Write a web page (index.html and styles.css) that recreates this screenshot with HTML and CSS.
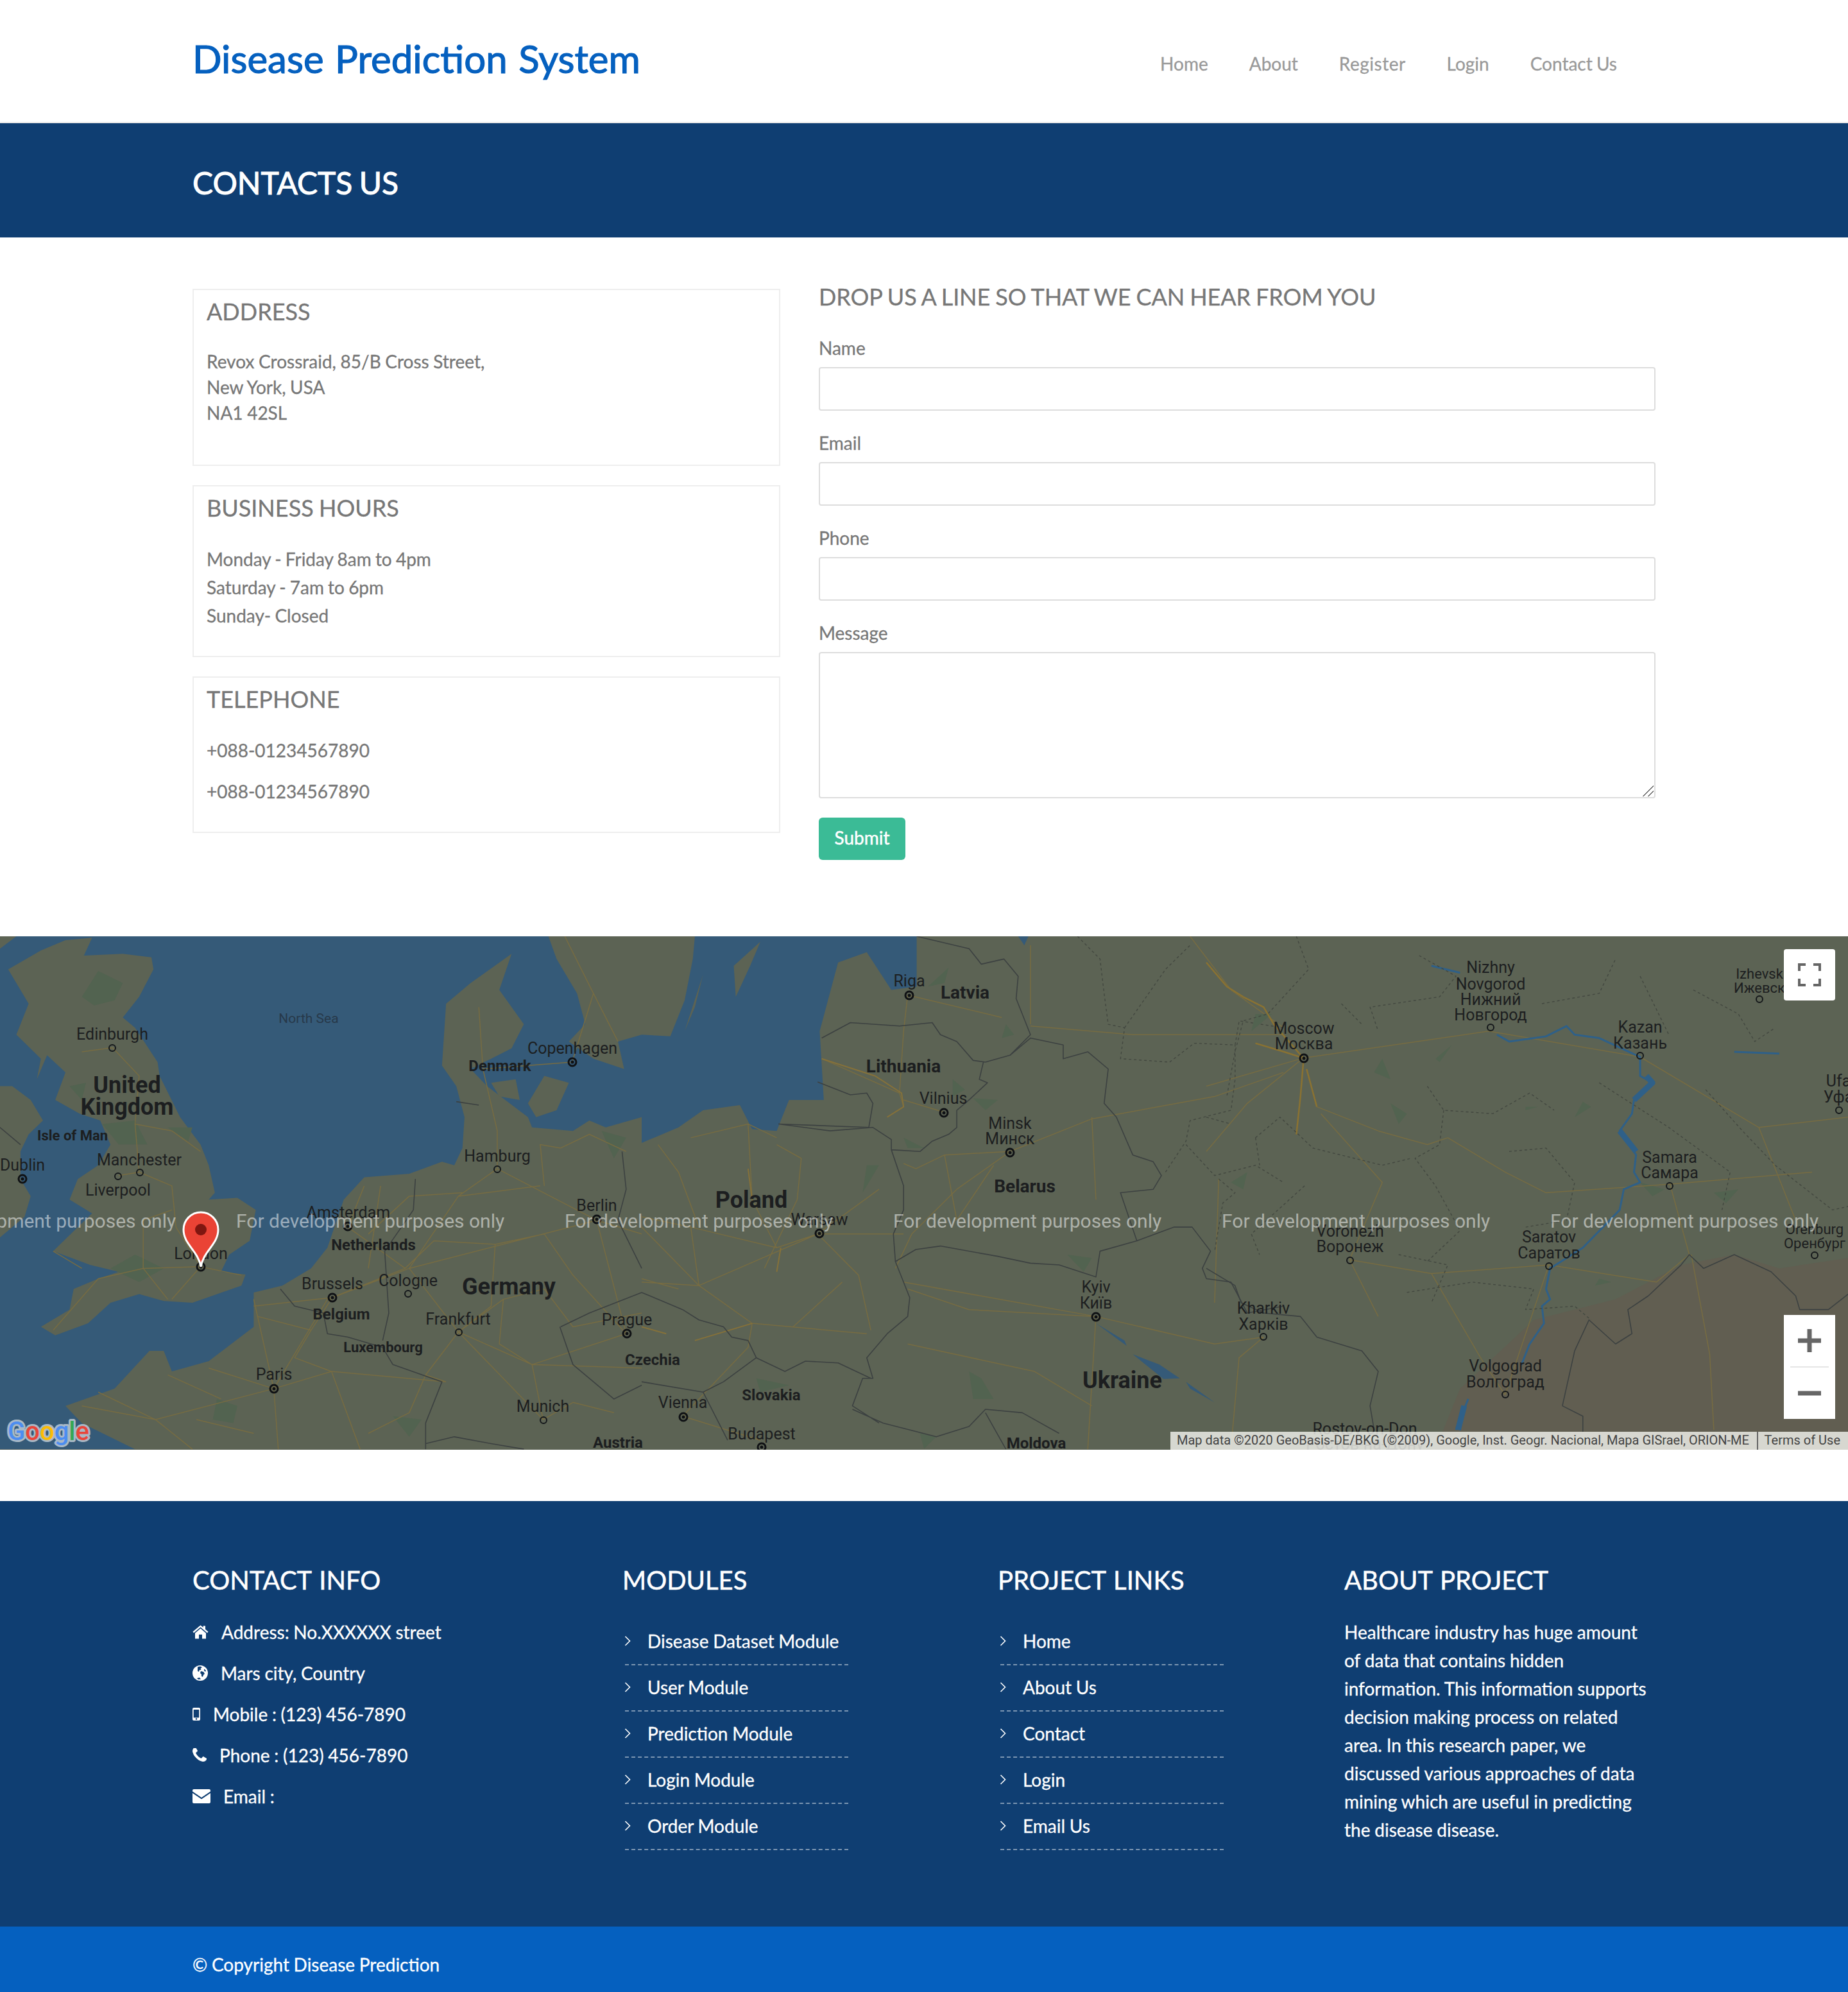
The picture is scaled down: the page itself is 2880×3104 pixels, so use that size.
FILE: index.html
```html
<!DOCTYPE html>
<html lang="en">
<head>
<meta charset="utf-8">
<title>Contacts Us - Disease Prediction System</title>
<link rel="stylesheet" href="styles.css">
</head>
<body>
<header class="site-header">
  <a class="brand" href="#">Disease Prediction System</a>
  <nav class="main-nav">
    <a href="#">Home</a><a href="#">About</a><a class="nav-register" href="#">Register</a><a href="#">Login</a><a href="#">Contact Us</a>
  </nav>
</header>
<section class="banner"><h1>CONTACTS US</h1></section>
<main class="contact">
  <div class="info-col">
    <article class="info-box box-address">
      <h3>ADDRESS</h3>
      <p>Revox Crossraid, 85/B Cross Street,<br>New York, USA<br>NA1 42SL</p>
    </article>
    <article class="info-box box-hours">
      <h3>BUSINESS HOURS</h3>
      <p>Monday - Friday 8am to 4pm<br>Saturday - 7am to 6pm<br>Sunday- Closed</p>
    </article>
    <article class="info-box box-phone">
      <h3>TELEPHONE</h3>
      <p>+088-01234567890</p>
      <p>+088-01234567890</p>
    </article>
  </div>
  <form class="contact-form">
    <h2>DROP US A LINE SO THAT WE CAN HEAR FROM YOU</h2>
    <label for="f-name">Name</label><input id="f-name" type="text">
    <label for="f-email">Email</label><input id="f-email" type="text">
    <label for="f-phone">Phone</label><input id="f-phone" type="text">
    <label for="f-msg">Message</label>
    <div class="msg-wrap"><textarea id="f-msg"></textarea></div>
    <button type="button">Submit</button>
  </form>
</main>
<section class="map">
<svg class="map-svg" viewBox="0 0 2880 800" width="2880" height="800" xmlns="http://www.w3.org/2000/svg">
  <rect class="land" width="2880" height="800"/>
  <!-- zone west -->
  <g transform="matrix(.6378 0 0 .5356 0 -18.2)">
    <path class="sea" d="M0,34L1340,34L1360,100L1410,200L1430,290L1390,340L1450,390L1525,420L1510,340L1568,320L1568,560L1480,590L1440,570L1400,600L1300,590L1290,560L1190,470L1150,420L1250,360L1280,290L1220,190L1250,85L1150,170L1090,230L1080,410L1115,470L1135,560L1130,650L1110,700L1080,690L1000,725L890,735L840,800L800,940L760,1000L690,1050L620,1070L620,1170L510,1270L420,1300L400,1240L365,1240L280,1350L160,1400L200,1450L330,1526L0,1526Z"/>
    <path class="land" d="M0,34L40,34L0,70ZM100,75L160,45L225,38L205,90L300,85L370,95L375,130L340,210L300,270L330,300L385,400L390,440L440,560L490,640L510,700L525,780L510,800L580,795L625,830L610,920L560,960L540,1010L600,1018L590,1050L470,1100L400,1095L340,1075L270,1100L215,1160L135,1195L100,1170L170,1120L180,1060L240,1030L290,1010L220,990L130,950L190,880L225,840L170,800L190,740L240,700L270,640L245,570L195,550L135,510L160,430L115,380L90,450L100,390L40,320L70,230L20,130ZM0,470L30,470L75,510L105,570L70,610L50,660L50,740L75,790L60,850L0,910ZM1290,520L1330,440L1390,460L1360,540L1310,560ZM1200,460L1260,450L1270,510L1220,500Z"/>
    <path class="green" d="M200,210L240,135L300,170L280,220L230,235ZM250,580L330,570L360,640L290,640ZM170,470L210,460L200,510ZM410,590L470,590L460,630ZM330,960L400,1000L340,1040L270,1000ZM530,1380L580,1400L570,1450L520,1440ZM960,1430L1030,1440L1000,1490ZM1470,600L1530,620L1500,680Z"/>
    <path class="road" d="M200,370L275,358L340,440L330,580L340,720L290,730M340,720L420,760L430,880L490,995L590,1020M490,995L350,1000L240,1030M490,995L420,1090M350,1000L350,860L420,830M669,1350L620,1090M669,1350L510,1290M669,1350L380,1440L240,1360M669,1350L810,1300L1090,1330M669,1350L680,1526M669,1350L800,1090L990,1000M1215,710L1120,790L1000,1000L1120,1185L1327,1440M1215,710L1458,860M1458,860L1530,1190M1120,1185L1300,1280L1530,1190M850,880L990,1000M1000,1000L1458,860M1458,860L1568,900M1170,240L1180,420L1215,600L1215,710M1180,420L1398,400M1398,400L1450,200L1380,34M812,1085L1000,1000M812,1085L620,1110M1120,1185L1040,1310L1090,1330M1300,1280L1568,1290M1120,790L1320,760M850,880L890,760M1370,650L1440,610L1530,660M1120,1185L1230,1090L1330,1060M380,1440L470,1526M810,1300L880,1526M200,1400L380,1440M630,1140L760,1180L812,1085M760,1180L720,1260L810,1300M900,1000L930,760M990,1000L1060,920L1210,930L1330,900L1400,1020L1530,1190M1210,930L1200,1110L1120,1185M1330,1060L1400,1170L1568,1130M1230,1090L1220,1220L1300,1280M1327,1440L1400,1390L1500,1420M1300,1280L1327,1440M1040,1310L1000,1420L900,1480M540,1380L410,1310M480,1440L620,1480M1130,780L1000,790L900,900M1330,760L1320,640L1370,650M1450,200L1510,340M200,1000L130,950M240,1030L130,1180M410,1090L350,1000M330,580L420,600L490,660"/>
    <path class="border" d="M685,1060L720,1110L790,1130L800,1190L850,1200L935,1230L960,1280L1080,1330L1040,1450L1040,1526M1015,740L1010,830L940,950L950,1130L935,1210M1115,515L1170,525M1368,1170L1400,1280L1500,1380L1568,1340M1370,1170L1440,1130L1568,1070M1040,1510L1110,1490L1200,1510L1280,1526M1520,660L1530,770L1510,860L1568,1000M0,590L50,640"/>
  </g>
  <!-- zone centre -->
  <g transform="matrix(.6378 0 0 .5356 1000 -18.2)">
    <path class="sea" d="M130,34L672,34L672,180L610,190L550,80L480,110L435,310L445,510L360,510L330,600L270,595L240,525L150,540L90,590L0,635L0,320L70,325L105,220L125,100ZM920,34L945,34L935,60ZM1200,1250L1265,1280L1315,1320L1275,1322ZM1110,1160L1180,1210L1185,1225ZM1330,1330L1400,1390L1340,1350Z"/>
    <path class="land" d="M230,210L225,120L290,50L265,120ZM105,310L150,145L130,240Z"/>
    <path class="green" d="M700,180L750,125L740,170ZM890,290L910,320L880,330ZM760,450L790,480L760,500ZM810,505L870,510L840,540ZM550,700L580,700L540,780ZM640,620L690,650L650,650ZM1040,960L1100,970L1080,1010ZM800,1300L830,1320L860,1380L810,1380ZM280,1320L360,1340L290,1360ZM680,1480L720,1490L690,1525Z"/>
    <path class="road" d="M0,880L140,1050L430,900M430,900L580,770M430,900L640,900M430,900L330,940L120,880L0,850M430,900L530,1020L560,1180M140,1050L270,1160L260,1230L100,1430M270,1160L550,1190M100,1430L290,1500M440,390L630,490L640,530L600,560M640,510L737,545M650,205L640,310L630,490M650,205L880,270M900,660L1100,565L1400,500L1568,430M900,660L770,770L660,900L620,1000M900,660L740,670L670,710L640,695M1110,1140L1400,1220L1520,1200M1110,1140L800,1120L650,1060M1110,1140L1090,1526M1340,34L1440,190L1568,300M260,580L270,800L330,940M390,680L330,640M390,680L380,800L300,1000M120,880L140,1050L0,1040M950,295L1200,320L1568,320M950,60L950,290M740,670L770,860L860,700M1110,800L1100,560M1410,740L1400,1100M640,1040L1110,1140M490,1040L370,1170M650,1220L960,1300L1100,1400M0,1030L90,1060M120,620L260,580L330,620M40,640L90,720L140,880"/>
    <path class="major-thin" d="M440,390L570,440L635,490L640,530L600,560M130,1210L270,1160M0,1170L60,1190M260,710L270,800M340,940L330,1010"/>
    <path class="border" d="M440,330L510,285L630,295L710,285L730,320L770,340L810,395L840,400M672,34L800,70L830,115L885,100L920,150L915,215L950,320L900,380L840,400M835,400L825,450L845,460L800,510L770,540L770,590L750,610L710,630L680,660L610,655M430,458L510,495L550,490L565,520L555,590L335,580L460,600L565,590L610,625L610,655L640,760L640,830L615,900L620,980L655,1085L650,1140L600,1190L550,1260L565,1320L540,1320L515,1400L580,1450M620,980L670,945L730,935L870,965L950,985L1020,990L1110,1025L1120,950L1210,920L1170,780L1250,770L1270,730L1250,690L1200,670L1160,560L1130,520L1140,420L1090,370L1030,390L1030,350L950,330L900,380M1210,920L1300,880L1345,880L1390,950L1370,1000L1380,1030L1440,1040L1480,1130L1568,1110M0,1070L100,1120L140,1150L200,1170L220,1200L260,1210L280,1260L350,1300L400,1270L480,1275L560,1320M280,1260L200,1330L150,1360L0,1330M150,1360L210,1500M515,1410L590,1450L720,1490L800,1460L840,1410L930,1420L1020,1480M840,1420L890,1526"/>
    <path class="oblast" d="M1065,34L1120,100L1130,200L1140,290L1180,300L1170,390L1290,400L1350,345L1450,350L1460,280L1568,300M1280,720L1330,630L1340,570L1440,540L1450,450L1450,350M1330,640L1400,730L1500,700L1568,750M1410,740L1450,780L1420,810L1400,950M1500,620L1510,700M1180,300L1280,130L1340,60"/>
  </g>
  <!-- zone east -->
  <g transform="matrix(.6378 0 0 .5356 1880 -18.2)">
    <path class="steppe" d="M560,1526L620,1350L800,1150L1000,1090L1160,990L1290,960L1400,1000L1568,970L1568,1526Z"/>
    <path class="green" d="M60,750L100,720L90,770ZM430,390L450,450L410,430ZM450,520L490,550L470,580ZM920,515L940,530L900,560ZM960,1030L990,1040L950,1050ZM1060,750L1120,770L1090,790ZM1240,780L1300,770L1270,810ZM120,260L160,260L110,310ZM560,390L600,350L570,400ZM780,530L810,530L780,540Z"/>
    <path class="road" d="M237,388L690,310L1060,385M1060,385L1350,590L1568,560M237,388L0,470M270,530L420,600L540,640L590,620L730,720L830,780L1133,755M1133,755L1480,720M140,1200L80,1260L60,1526M350,975L550,1015L837,990M837,990L730,1368M350,975L420,1140M350,975L430,750L280,550M1185,960L1230,1250L1240,1470M550,1015L670,1260L730,1368M1133,755L1180,960M0,660L100,520L237,388M837,990L1100,1040L1180,960M1350,590L1440,860"/>
    <path class="major" d="M0,110L50,180L90,210L140,240L165,290L237,388M120,345L190,370L237,388M237,400L230,500L220,610M245,420L270,530"/>
    <path class="river" d="M550,120L620,140M710,320L740,340L830,325L880,295L900,320L960,330L1060,385L1060,440L1090,460L1045,510L1040,550L1010,600L1050,670L1045,720L1060,750L1020,770L1010,830L920,940L840,1000L830,1060L840,1090L820,1110L825,1160L790,1220L770,1280M640,1380L610,1470M1290,370L1400,375"/>
    <path class="wide-river" d="M1075,440L1090,460L1045,510M1010,600L1050,660M630,1400L615,1470"/>
    <path class="border" d="M0,1000L70,1050L85,1100L140,1130L230,1140L270,1200L380,1240L420,1300L400,1400L410,1470M870,1400L900,1240L935,1150L1000,1220L1040,1190L1030,1120L1080,1080L1160,990L1180,960L1215,1000L1290,960L1380,1010L1440,1080L1450,1120L1520,1120L1568,1075M870,1400L920,1430L920,1476"/>
    <path class="oblast" d="M220,34L250,130L150,260L90,280L70,370L50,500M520,90L610,150L570,210L400,240L420,310M820,230L960,200L1000,100M330,230L380,290M540,470L580,540L700,550L790,490L850,540M580,540L570,640L510,680L560,760L620,890L540,980M740,660L830,650L900,750L880,860L780,880M120,620L180,560L260,650L430,700L500,680M240,760L110,900L130,960M960,460L1130,590L1280,720L1260,830M1220,480L1310,600L1390,700L1530,830L1568,820M1190,190L1300,260L1340,340L1390,300M470,960L590,990L550,1100M0,560L60,580M490,1070L650,1040L800,1060L780,1120L900,1110L940,1150M1060,150L1130,320"/>
  </g>

  <g class="dots">
    <circle cx="175" cy="174" r="5"/><circle cx="218" cy="368" r="5"/><circle cx="184" cy="374" r="5"/><circle cx="775" cy="363" r="5"/><circle cx="636" cy="557" r="5"/><circle cx="715" cy="617" r="5"/><circle cx="847" cy="754" r="5"/><circle cx="2323" cy="142" r="5"/><circle cx="2556" cy="186" r="5"/><circle cx="2742" cy="98" r="5"/><circle cx="2866" cy="271" r="5"/><circle cx="2602" cy="389" r="5"/><circle cx="2104" cy="505" r="5"/><circle cx="2414" cy="514" r="5"/><circle cx="2828" cy="497" r="5"/><circle cx="1969" cy="624" r="5"/><circle cx="2346" cy="714" r="5"/>
  </g>
  <g class="capitals">
    <circle cx="35" cy="378" r="6"/><circle cx="892" cy="196" r="6"/><circle cx="313" cy="515" r="6"/><circle cx="542" cy="452" r="6"/><circle cx="930" cy="441" r="6"/><circle cx="518" cy="563" r="6"/><circle cx="427" cy="705" r="6"/><circle cx="977" cy="619" r="6"/><circle cx="1417" cy="92" r="6"/><circle cx="1471" cy="275" r="6"/><circle cx="1574" cy="337" r="6"/><circle cx="1277" cy="463" r="6"/><circle cx="1708" cy="593" r="6"/><circle cx="1065" cy="749" r="6"/><circle cx="1187" cy="796" r="6"/><circle cx="2032" cy="190" r="6"/>
  </g>
  <g class="capital-core">
    <circle cx="35" cy="378" r="2.5"/><circle cx="892" cy="196" r="2.5"/><circle cx="313" cy="515" r="2.5"/><circle cx="542" cy="452" r="2.5"/><circle cx="930" cy="441" r="2.5"/><circle cx="518" cy="563" r="2.5"/><circle cx="427" cy="705" r="2.5"/><circle cx="977" cy="619" r="2.5"/><circle cx="1417" cy="92" r="2.5"/><circle cx="1471" cy="275" r="2.5"/><circle cx="1574" cy="337" r="2.5"/><circle cx="1277" cy="463" r="2.5"/><circle cx="1708" cy="593" r="2.5"/><circle cx="1065" cy="749" r="2.5"/><circle cx="1187" cy="796" r="2.5"/><circle cx="2032" cy="190" r="2.5"/>
  </g>

  <g class="labels" transform="translate(0 -1)">
    <text x="175" y="162">Edinburgh</text>
    <text class="sea-label" x="481" y="136">North Sea</text>
    <text x="892" y="184">Copenhagen</text>
    <text class="b24" x="779" y="211">Denmark</text>
    <text class="b36" x="198" y="245">United</text>
    <text class="b36" x="198" y="279">Kingdom</text>
    <text class="b22" x="113" y="319">Isle of Man</text>
    <text x="35" y="366">Dublin</text>
    <text x="217" y="358">Manchester</text>
    <text x="184" y="405">Liverpool</text>
    <text x="775" y="352">Hamburg</text>
    <text x="930" y="429">Berlin</text>
    <text x="543" y="440">Amsterdam</text>
    <text x="313" y="504">London</text>
    <text class="b24" x="582" y="490">Netherlands</text>
    <text x="518" y="551">Brussels</text>
    <text x="636" y="546">Cologne</text>
    <text class="b36" x="793" y="559">Germany</text>
    <text class="b24" x="532" y="598">Belgium</text>
    <text x="714" y="606">Frankfurt</text>
    <text class="b22" x="597" y="649">Luxembourg</text>
    <text x="977" y="607">Prague</text>
    <text x="427" y="692">Paris</text>
    <text x="846" y="742">Munich</text>
    <text class="b24" x="963" y="798">Austria</text>
    <text class="b24" x="1017" y="669">Czechia</text>
    <text x="1417" y="79">Riga</text>
    <text class="b28" x="1504" y="98">Latvia</text>
    <text class="b28" x="1408" y="213">Lithuania</text>
    <text x="1470" y="262">Vilnius</text>
    <text x="1574" y="301">Minsk</text>
    <text x="1574" y="325">Минск</text>
    <text class="b28" x="1597" y="400">Belarus</text>
    <text class="b36" x="1171" y="424">Poland</text>
    <text x="1277" y="451">Warsaw</text>
    <text x="1708" y="556">Kyiv</text>
    <text x="1708" y="581">Київ</text>
    <text x="1064" y="736">Vienna</text>
    <text class="b24" x="1202" y="724">Slovakia</text>
    <text x="1187" y="785">Budapest</text>
    <text class="b36" x="1749" y="705">Ukraine</text>
    <text class="b24" x="1615" y="799">Moldova</text>
    <text x="1969" y="589">Kharkiv</text>
    <text x="1969" y="614">Харків</text>
    <text x="2323" y="58">Nizhny</text>
    <text x="2323" y="84">Novgorod</text>
    <text x="2323" y="108">Нижний</text>
    <text x="2323" y="132">Новгород</text>
    <text x="2032" y="153">Moscow</text>
    <text x="2032" y="177">Москва</text>
    <text x="2556" y="151">Kazan</text>
    <text x="2556" y="176">Казань</text>
    <text class="s22" x="2742" y="67">Izhevsk</text>
    <text class="s22" x="2742" y="89">Ижевск</text>
    <text x="2865" y="235">Ufa</text>
    <text x="2865" y="260">Уфа</text>
    <text x="2602" y="354">Samara</text>
    <text x="2602" y="378">Самара</text>
    <text x="2104" y="469">Voronezh</text>
    <text x="2104" y="493">Воронеж</text>
    <text x="2414" y="478">Saratov</text>
    <text x="2414" y="503">Саратов</text>
    <text class="s22" x="2828" y="465">Orenburg</text>
    <text class="s22" x="2828" y="487">Оренбург</text>
    <text x="2346" y="679">Volgograd</text>
    <text x="2346" y="704">Волгоград</text>
    <text x="2127" y="777">Rostov-on-Don</text>
    <text x="2127" y="801">Ростов-на-Дону</text>
  </g>

  <g class="watermark">
    <text x="-144" y="454">For development purposes only</text>
    <text x="368" y="454">For development purposes only</text>
    <text x="880" y="454">For development purposes only</text>
    <text x="1392" y="454">For development purposes only</text>
    <text x="1904" y="454">For development purposes only</text>
    <text x="2416" y="454">For development purposes only</text>
  </g>

  <path class="pin" d="M313 515C309 490 286 480 286 457a27 27 0 0 1 54 0C340 480 317 490 313 515Z"/>
  <circle class="pin-dot" cx="313" cy="457" r="9"/>

  <text class="google" x="12" y="785"><tspan class="g-blue">G</tspan><tspan class="g-red">o</tspan><tspan class="g-yellow">o</tspan><tspan class="g-blue">g</tspan><tspan class="g-green">l</tspan><tspan class="g-red">e</tspan></text>
</svg>
  <button class="map-btn fullscreen" type="button" aria-label="Toggle fullscreen view">
    <svg viewBox="0 0 36 36" width="36" height="36"><path d="M2 12V2H12M24 2H34V12M34 24V34H24M12 34H2V24"/></svg>
  </button>
  <div class="zoom-control">
    <button class="map-btn zoom-btn" type="button" aria-label="Zoom in"><svg viewBox="0 0 36 36" width="36" height="36"><path d="M0 18H36M18 0V36"/></svg></button>
    <span class="zoom-divider"></span>
    <button class="map-btn zoom-btn" type="button" aria-label="Zoom out"><svg viewBox="0 0 36 36" width="36" height="36"><path d="M0 18H36"/></svg></button>
  </div>
  <div class="attribution"><span>Map data ©2020 GeoBasis-DE/BKG (©2009), Google, Inst. Geogr. Nacional, Mapa GISrael, ORION-ME</span><span class="terms">Terms of Use</span></div>
</section>
<footer class="site-footer">
  <div class="footer-grid">
    <div class="footer-col">
      <h4>CONTACT INFO</h4>
      <ul class="contact-list">
        <li><svg class="ic" width="25" height="22" viewBox="0 0 25 22"><path d="M12.5 0.5L0.5 10.6L2 12.4L12.5 3.6L23 12.4L24.5 10.6L20 6.8V1.5H16.7V4Z"/><path d="M12.5 5.6L4 12.8V21.5H10V15H15V21.5H21V12.8Z"/></svg>Address: No.XXXXXX street</li>
        <li><svg class="ic" width="24" height="24" viewBox="0 0 24 24"><circle cx="12" cy="12" r="12"/><path class="ic-cut" d="M8 2.5L12 1.5L15 3L12.5 5L13.5 7L10.5 7.5L10 10L8 9ZM13 9L17 10L19 13L17 15L16 18L14 17L14 14L12 12ZM18 5.500L21 8L20 10L18 8ZM7 20L11 19L13 21.500L9 22Z"/></svg>Mars city, Country</li>
        <li><svg class="ic" width="12" height="20" viewBox="0 0 12 20"><path fill-rule="evenodd" d="M2 0H10A2 2 0 0 1 12 2V18A2 2 0 0 1 10 20H2A2 2 0 0 1 0 18V2A2 2 0 0 1 2 0ZM1.700 3V15.500H10.300V3ZM6 16.300A1.300 1.300 0 1 0 6 18.900A1.300 1.300 0 1 0 6 16.300Z"/></svg>Mobile : (123) 456-7890</li>
        <li><svg class="ic" width="22" height="22" viewBox="192 192 1408 1408"><path d="M1600 1240q0 27-10 70.5t-21 68.500q-21 50-122 106-94 51-186 51-27 0-53-3.500t-57.500-12.500-47-14.500-55.500-20.500-49-18q-98-35-175-83-127-79-264-216t-216-264q-48-77-83-175-3-9-18-49t-20.500-55.500-14.500-47-12.500-57.500-3.500-53q0-92 51-186 56-101 106-122 25-11 68.500-21t70.500-10q14 0 21 3 18 6 53 76 11 19 30 54t35 63.500 31 53.500q3 4 17.500 25t21.500 35.500 7 28.500q0 20-28.500 50t-62 55-62 53-28.500 46q0 9 5 22.500t8.500 20.500 14 24 11.500 19q76 137 174 235t235 174q2 1 19 11.500t24 14 20.500 8.500 22.500 5q18 0 46-28.500t53-62 55-62 50-28.500q14 0 28.500 7t35.500 21.500 25 17.500q25 15 53.500 31t63.500 35 54 30q70 35 76 53 3 7 3 21z"/></svg>Phone : (123) 456-7890</li>
        <li><svg class="ic" width="28" height="22" viewBox="0 0 28 22"><path d="M2 0H26A2 2 0 0 1 28 2V3.500L14 13L0 3.500V2A2 2 0 0 1 2 0Z"/><path d="M0 6L14 15.500L28 6V20A2 2 0 0 1 26 22H2A2 2 0 0 1 0 20Z"/></svg>Email :</li>
      </ul>
    </div>
    <div class="footer-col">
      <h4>MODULES</h4>
      <ul class="link-list">
        <li><svg class="chev" width="10" height="16" viewBox="0 0 10 16"><path d="M1.500 1L8.500 8L1.500 15"/></svg><a href="#">Disease Dataset Module</a></li>
        <li><svg class="chev" width="10" height="16" viewBox="0 0 10 16"><path d="M1.500 1L8.500 8L1.500 15"/></svg><a href="#">User Module</a></li>
        <li><svg class="chev" width="10" height="16" viewBox="0 0 10 16"><path d="M1.500 1L8.500 8L1.500 15"/></svg><a href="#">Prediction Module</a></li>
        <li><svg class="chev" width="10" height="16" viewBox="0 0 10 16"><path d="M1.500 1L8.500 8L1.500 15"/></svg><a href="#">Login Module</a></li>
        <li><svg class="chev" width="10" height="16" viewBox="0 0 10 16"><path d="M1.500 1L8.500 8L1.500 15"/></svg><a href="#">Order Module</a></li>
      </ul>
    </div>
    <div class="footer-col">
      <h4>PROJECT LINKS</h4>
      <ul class="link-list">
        <li><svg class="chev" width="10" height="16" viewBox="0 0 10 16"><path d="M1.500 1L8.500 8L1.500 15"/></svg><a href="#">Home</a></li>
        <li><svg class="chev" width="10" height="16" viewBox="0 0 10 16"><path d="M1.500 1L8.500 8L1.500 15"/></svg><a href="#">About Us</a></li>
        <li><svg class="chev" width="10" height="16" viewBox="0 0 10 16"><path d="M1.500 1L8.500 8L1.500 15"/></svg><a href="#">Contact</a></li>
        <li><svg class="chev" width="10" height="16" viewBox="0 0 10 16"><path d="M1.500 1L8.500 8L1.500 15"/></svg><a href="#">Login</a></li>
        <li><svg class="chev" width="10" height="16" viewBox="0 0 10 16"><path d="M1.500 1L8.500 8L1.500 15"/></svg><a href="#">Email Us</a></li>
      </ul>
    </div>
    <div class="footer-col">
      <h4>ABOUT PROJECT</h4>
      <p class="about">Healthcare industry has huge amount<br>of data that contains hidden<br>information. This information supports<br>decision making process on related<br>area. In this research paper, we<br>discussed various approaches of data<br>mining which are useful in predicting<br>the disease disease.</p>
    </div>
  </div>
  <div class="copyright">© Copyright Disease Prediction</div>
</footer>
</body>
</html>
```
FILE: styles.css
```css
* { box-sizing: border-box; }
html, body { margin: 0; padding: 0; }
body {
  font-family: Lato, "Liberation Sans", sans-serif;
  font-size: 28px;
  line-height: 40px;
  color: #777;
  background: #fff;
  word-spacing: -1px;
  -webkit-text-stroke: .3px currentColor;
}
h1, h2, h3, h4, p, ul { margin: 0; padding: 0; font-weight: 400; }
ul { list-style: none; }
a { color: inherit; text-decoration: none; }

.site-header {
  height: 192px;
  display: flex;
  align-items: center;
  justify-content: space-between;
  padding: 0 360px 0 300px;
  border-bottom: 2px solid #e7e7e7;
}
.brand {
  font-size: 60px;
  line-height: 70px;
  color: #0560bf;
  margin-bottom: 8px;
  word-spacing: 2px;
  -webkit-text-stroke: 1.2px currentColor;
}
.main-nav { display: flex; gap: 64px; padding-top: 8px; color: #999; }
.nav-register { letter-spacing: .5px; }

.banner {
  height: 178px;
  background: #0f3e72;
  display: flex;
  align-items: center;
  padding-left: 300px;
}
.banner h1 {
  font-size: 48px;
  line-height: 60px;
  color: #fff;
  margin-top: 8px;
  word-spacing: -2px;
  -webkit-text-stroke: 1px currentColor;
}

.contact {
  display: grid;
  grid-template-columns: 916px 1304px;
  column-gap: 60px;
  padding: 70px 0 119px 300px;
}
.info-col { padding-top: 10px; display: flex; flex-direction: column; gap: 30px; }
.info-box { border: 2px solid #eee; padding: 11px 20px 41px; }
.info-box h3 { font-size: 36px; line-height: 44px; margin-bottom: 36px; }
.box-address { padding-bottom: 61px; }
.box-address p { word-spacing: -.6px; }
.box-hours p { line-height: 44px; }
.box-phone p { line-height: 44px; }
.box-phone p + p { margin-top: 20px; }

.contact-form { display: flex; flex-direction: column; align-items: stretch; }
.contact-form h2 { font-size: 36px; line-height: 44px; margin-bottom: 38px; letter-spacing: -.1px; }
.contact-form label { height: 40px; margin-bottom: 10px; }
.contact-form input, .contact-form textarea {
  display: block;
  width: 100%;
  border: 2px solid #ddd;
  border-radius: 4px;
  background: #fff;
  padding: 0;
  margin: 0 0 30px;
  outline: none;
}
.contact-form input { height: 68px; }
.contact-form textarea { height: 228px; resize: none; }
.msg-wrap { position: relative; }
.msg-wrap::after {
  content: "";
  position: absolute;
  right: 3px;
  bottom: 33px;
  width: 18px;
  height: 18px;
  background: linear-gradient(135deg, transparent 50%, #666 50%, #666 56%, transparent 56%, transparent 74%, #666 74%, #666 80%, transparent 80%);
}
.contact-form button {
  align-self: flex-start;
  width: 135px;
  height: 66px;
  background: #3bbb96;
  border: 0;
  border-radius: 6px;
  color: #fff;
  font: 400 28px/38px Lato, sans-serif;
  -webkit-text-stroke: .5px currentColor;
  padding: 0 0 4px;
}

.map { position: relative; height: 800px; overflow: hidden; -webkit-text-stroke: 0; word-spacing: 0; }
.map-svg { display: block; }
.land { fill: #5c6354; }
.sea { fill: #355a78; }
.steppe { fill: #615e51; }
.green { fill: #526350; }
.road, .major, .major-thin, .border, .oblast, .river, .wide-river { fill: none; stroke-linejoin: round; }
.map-svg path.road, .map-svg path.major, .map-svg path.major-thin, .map-svg path.border, .map-svg path.oblast, .map-svg path.river, .map-svg path.wide-river { vector-effect: non-scaling-stroke; }
.road { stroke: #776c42; stroke-width: 1.5; }
.major-thin { stroke: #85713a; stroke-width: 2; }
.major { stroke: #8a7232; stroke-width: 2.5; }
.border { stroke: #3c4141; stroke-width: 1.6; }
.oblast { stroke: #434840; stroke-width: 1.4; stroke-dasharray: 4 4; }
.river { stroke: #2f6088; stroke-width: 3; }
.wide-river { stroke: #2f6088; stroke-width: 9; }
.dots circle { fill: none; stroke: #14171a; stroke-width: 2; }
.capitals circle { fill: none; stroke: #0f1114; stroke-width: 3; }
.capital-core circle { fill: #0f1114; }
.labels text {
  font-family: Roboto, sans-serif;
  font-size: 25px;
  text-anchor: middle;
  fill: #1c1e20;
}
.labels .s22 { font-size: 22px; }
.labels .b22 { font-size: 22px; font-weight: 700; }
.labels .b24 { font-size: 24px; font-weight: 700; }
.labels .b28 { font-size: 28px; font-weight: 700; }
.labels .b36 { font-size: 36px; font-weight: 700; }
.labels .sea-label { font-size: 21px; fill: #27394a; }
.watermark text { font-family: Roboto, sans-serif; font-size: 30px; fill: rgba(255,255,255,.5); }
.pin { fill: #ea4335; stroke: #fff; stroke-width: 3; }
.pin-dot { fill: #7f1610; }
.google {
  font-family: Roboto, sans-serif;
  font-size: 40px;
  font-weight: 500;
  stroke: #a9b9c6;
  stroke-width: 6px;
  paint-order: stroke;
  stroke-linejoin: round;
}
.g-blue { fill: #4d8df0; }
.g-red { fill: #e8463a; }
.g-yellow { fill: #fbbc05; }
.g-green { fill: #34a853; }

.map-btn {
  display: flex;
  align-items: center;
  justify-content: center;
  width: 80px;
  height: 80px;
  background: #fff;
  border: 0;
  padding: 0;
}
.map-btn svg { fill: none; stroke: #666; stroke-width: 4; }
.zoom-btn svg { stroke-width: 7; }
.fullscreen { position: absolute; top: 20px; right: 20px; border-radius: 4px; }
.zoom-control {
  position: absolute;
  top: 590px;
  right: 20px;
  width: 80px;
  background: #fff;
  border-radius: 4px;
  display: flex;
  flex-direction: column;
  align-items: center;
}
.zoom-divider { width: 60px; height: 2px; background: #e6e6e6; }
.attribution {
  position: absolute;
  right: 0;
  bottom: 0;
  width: 1056px;
  height: 28px;
  display: flex;
  justify-content: space-between;
  padding: 0 12px 0 10px;
  background: rgba(245,245,240,.8);
  font: 20px/27px Roboto, sans-serif;
  color: #444;
  white-space: nowrap;
}
.terms { border-left: 2px solid #666; padding-left: 10px; }

.site-footer { margin-top: 80px; background: #0f3e72; color: #fff; word-spacing: -.5px; }
.footer-grid {
  display: grid;
  grid-template-columns: 670px 585px 540px 1fr;
  padding: 101px 0 119px 300px;
}
.footer-col h4 { font-size: 40px; line-height: 44px; word-spacing: 2px; -webkit-text-stroke: .5px currentColor; }
.contact-list { margin-top: 37px; display: flex; flex-direction: column; gap: 20px; }
.contact-list li { display: flex; align-items: center; gap: 20px; height: 44px; }
.ic { fill: #fff; flex: none; }
.ic-cut { fill: #0f3e72; }
.link-list { margin-top: 53px; padding-left: 4px; width: 352px; }
.link-list li {
  display: flex;
  align-items: center;
  gap: 26px;
  height: 58px;
  padding-bottom: 16px;
  border-bottom: 2px dashed rgba(255,255,255,.45);
  margin-bottom: 14px;
}
.link-list li:last-child { margin-bottom: 0; }
.chev { fill: none; stroke: #fff; stroke-width: 1.6; flex: none; margin-left: -1px; }
.about { margin-top: 37px; line-height: 44px; word-spacing: -.3px; }
.copyright { background: #0560bf; padding: 39px 0 24px 300px; height: 103px; }
```
